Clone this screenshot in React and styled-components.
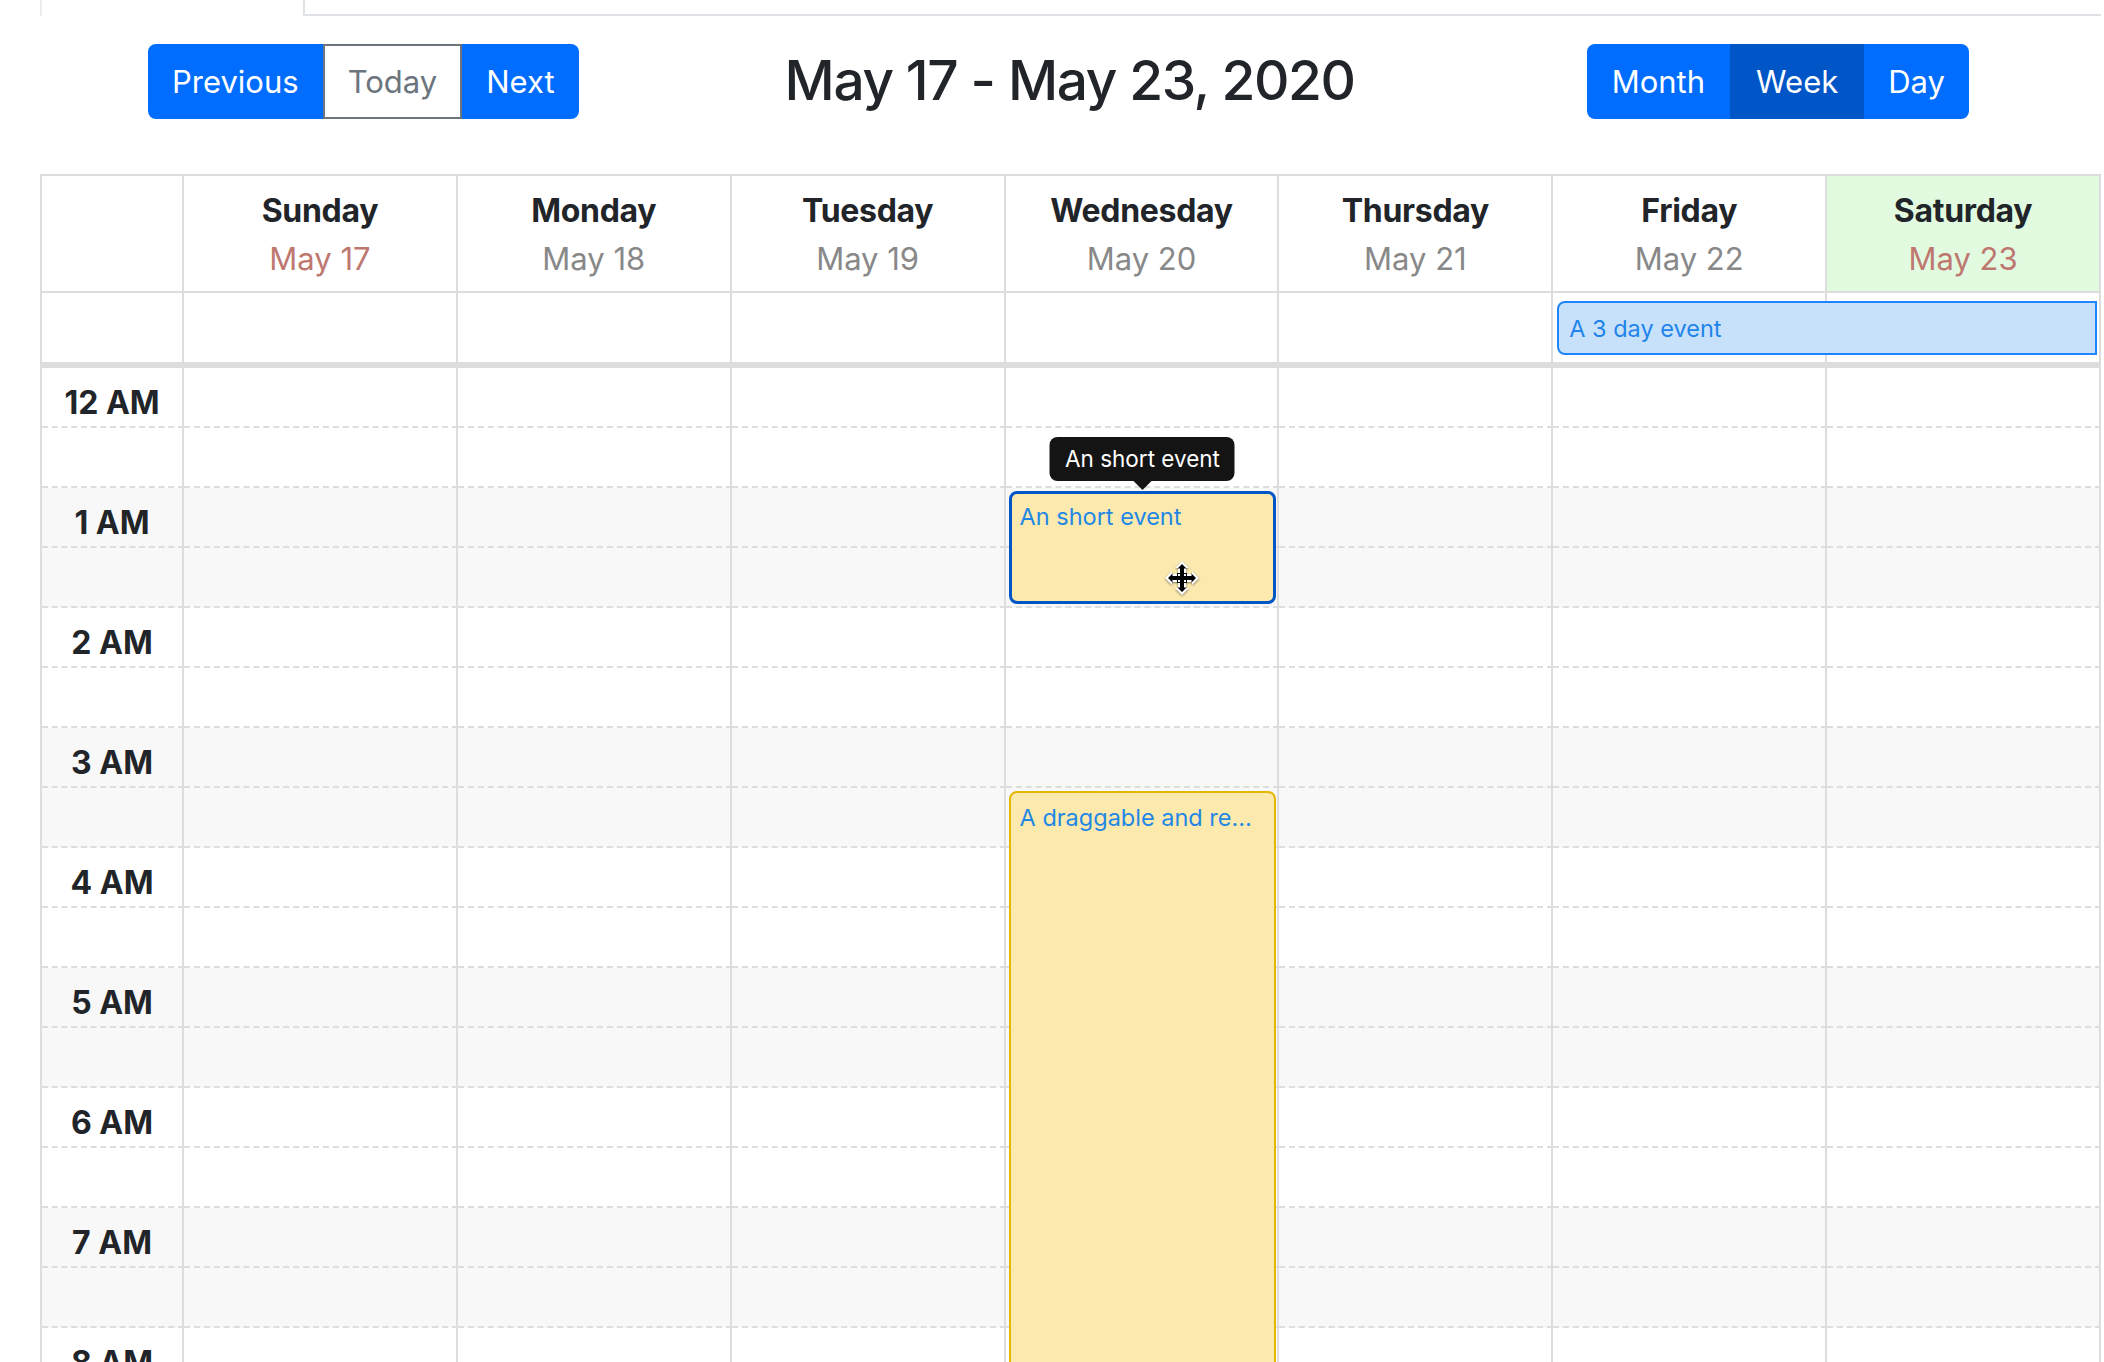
import React from "react";
import styled, { createGlobalStyle } from "styled-components";

const COLS = "142px repeat(7, 1fr)";
const LINE = "#ddd";
const SLOT_COUNT = 18;

const GlobalStyle = createGlobalStyle`
  html, body {
    margin: 0;
    background: #fff;
  }
  body {
    font-family: Inter, "Liberation Sans", sans-serif;
    color: #212529;
    overflow: hidden;
  }
`;

const Page = styled.div`
  padding: 0 3px 0 40px;
`;

const Tabs = styled.div`
  display: flex;
  height: 14px;
  border-bottom: 2px solid #dee2e6;
`;

const ActiveTab = styled.div`
  width: 265px;
  height: 16px;
  box-sizing: border-box;
  background: #fff;
  border-left: 2px solid #e9ecef;
  border-right: 2px solid #dee2e6;
`;

const Toolbar = styled.div`
  display: flex;
  align-items: center;
  justify-content: space-between;
  margin-top: 28px;
  padding: 0 132px 0 108px;
`;

const ButtonGroup = styled.div`
  display: inline-flex;
  border-radius: 8px;
  overflow: hidden;
`;

const Button = styled.button`
  height: 75px;
  padding: 0 ${({ $pad }) => $pad}px;
  font-family: inherit;
  font-size: 31px;
  border: none;
  cursor: pointer;
  color: ${({ $outline }) => ($outline ? "#6c757d" : "#fff")};
  background: ${({ $outline, $active }) =>
    $outline ? "#fff" : $active ? "#0055c7" : "#006dff"};
  box-shadow: ${({ $outline }) =>
    $outline ? "inset 0 0 0 2px #6c757d" : "none"};
`;

const Title = styled.h1`
  margin: 0 26px 4px 0;
  font-size: 55px;
  font-weight: 500;
  color: #212529;
  letter-spacing: -1.4px;
`;

const Calendar = styled.div`
  margin-top: 55px;
  border-top: 2px solid ${LINE};
  border-left: 2px solid ${LINE};
`;

const HeaderRow = styled.div`
  display: grid;
  grid-template-columns: ${COLS};
`;

const HeaderCell = styled.div`
  height: 117px;
  box-sizing: border-box;
  padding-top: 15px;
  text-align: center;
  border-right: 2px solid ${LINE};
  border-bottom: 2px solid ${LINE};
  background: ${({ $today }) => ($today ? "#e2fbe0" : "#fff")};
`;

const DayName = styled.div`
  font-size: 32px;
  line-height: 40px;
  font-weight: 700;
  color: #212529;
  letter-spacing: -0.3px;
`;

const DayDate = styled.div`
  margin-top: 9px;
  font-size: 31px;
  line-height: 38px;
  color: ${({ $weekend }) => ($weekend ? "#be7870" : "#888")};
`;

const AllDayRow = styled.div`
  display: grid;
  grid-template-columns: ${COLS};
  grid-template-rows: 69px;
  border-bottom: 6px solid ${LINE};
`;

const AllDayLines = styled.div`
  grid-column: 1 / -1;
  grid-row: 1;
  display: grid;
  grid-template-columns: ${COLS};
`;

const AllDayCell = styled.div`
  border-right: 2px solid ${LINE};
`;

const AllDayEvent = styled.div`
  grid-column: 7 / 9;
  grid-row: 1;
  margin: 8px 4px 7px 4px;
  display: flex;
  align-items: center;
  padding: 0 10px;
  background: #c8e1fa;
  border: 2px solid #1f85ff;
  border-radius: 8px 0 0 8px;
  color: #1f84ea;
  font-size: 23.5px;
`;

const TimeBody = styled.div`
  display: grid;
  grid-template-columns: ${COLS};
`;

const Column = styled.div`
  display: grid;
  grid-template-columns: 100%;
  grid-template-rows: repeat(${SLOT_COUNT}, 60px);
`;

const SlotStack = styled.div`
  grid-column: 1;
  grid-row: 1 / -1;
  display: flex;
  flex-direction: column;
`;

const Slot = styled.div`
  height: 60px;
  flex: none;
  box-sizing: border-box;
  border-bottom: 2px dashed ${LINE};
  border-right: 2px solid ${LINE};
  background: ${({ $odd }) => ($odd ? "#f8f8f8" : "#fff")};
  display: flex;
  align-items: center;
  justify-content: center;
`;

const HourLabel = styled.span`
  font-size: 32px;
  font-weight: 700;
  color: #212529;
  margin-top: 10px;
`;

const Event = styled.div`
  grid-column: 1;
  position: relative;
  margin: 3px 3px 4px 3px;
  padding: ${({ $selected }) => ($selected ? "9px 8px" : "11px 22px 11px 9px")};
  box-sizing: border-box;
  background: #fbe9ad;
  border: ${({ $selected }) =>
    $selected ? "3px solid #0055c7" : "2px solid #e5b700"};
  border-radius: 8px;
  min-width: 0;
`;

const EventTitle = styled.div`
  font-size: 23.5px;
  line-height: 28px;
  color: #1f87e6;
  white-space: nowrap;
  overflow: hidden;
  text-overflow: ellipsis;
`;

const Tooltip = styled.div`
  position: absolute;
  left: 50%;
  bottom: calc(100% + 13px);
  transform: translateX(-50%);
  background: #141414;
  color: #fff;
  font-size: 22.5px;
  line-height: 44px;
  padding: 0 15px;
  border-radius: 8px;
  white-space: nowrap;

  &::after {
    content: "";
    position: absolute;
    top: 100%;
    left: 50%;
    transform: translateX(-50%);
    border-top: 9px solid #141414;
    border-left: 9px solid transparent;
    border-right: 9px solid transparent;
  }
`;

const MoveCursor = styled.svg`
  position: absolute;
  left: 153px;
  top: 67px;
  filter: drop-shadow(0 1px 1px rgba(0, 0, 0, 0.45));
`;

const days = [
  { name: "Sunday", date: "May 17", weekend: true },
  { name: "Monday", date: "May 18" },
  { name: "Tuesday", date: "May 19" },
  { name: "Wednesday", date: "May 20" },
  { name: "Thursday", date: "May 21" },
  { name: "Friday", date: "May 22" },
  { name: "Saturday", date: "May 23", weekend: true, today: true },
];

function hourLabel(h) {
  const suffix = h < 12 ? "AM" : "PM";
  const n = h % 12 === 0 ? 12 : h % 12;
  return `${n} ${suffix}`;
}

const slots = Array.from({ length: SLOT_COUNT }, (_, i) => i);

function Cursor() {
  return (
    <MoveCursor width="34" height="34" viewBox="0 0 34 34">
      <path
        d="M17 0 L24 7 L21 7 L21 13 L27 13 L27 10 L34 17 L27 24 L27 21 L21 21 L21 27 L24 27 L17 34 L10 27 L13 27 L13 21 L7 21 L7 24 L0 17 L7 10 L7 13 L13 13 L13 7 L10 7 Z"
        fill="#fff"
      />
      <path
        d="M17 3 L21.5 7.5 L19 7.5 L19 15 L26.5 15 L26.5 12.5 L31 17 L26.5 21.5 L26.5 19 L19 19 L19 26.5 L21.5 26.5 L17 31 L12.5 26.5 L15 26.5 L15 19 L7.5 19 L7.5 21.5 L3 17 L7.5 12.5 L7.5 15 L15 15 L15 7.5 L12.5 7.5 Z"
        fill="#000"
      />
      <rect x="12" y="12" width="10" height="10" fill="#000" />
      <rect x="13" y="13" width="2" height="2" fill="#fff" />
      <rect x="19" y="13" width="2" height="2" fill="#fff" />
      <rect x="13" y="19" width="2" height="2" fill="#fff" />
      <rect x="19" y="19" width="2" height="2" fill="#fff" />
    </MoveCursor>
  );
}

function DayColumn({ index }) {
  return (
    <Column>
      <SlotStack>
        {slots.map((s) => (
          <Slot key={s} $odd={Math.floor(s / 2) % 2 === 1} />
        ))}
      </SlotStack>
      {index === 3 && (
        <>
          <Event $selected style={{ gridRow: "3 / 5" }}>
            <EventTitle>An short event</EventTitle>
            <Tooltip>An short event</Tooltip>
            <Cursor />
          </Event>
          <Event style={{ gridRow: `8 / ${SLOT_COUNT + 1}` }}>
            <EventTitle>A draggable and resizable event</EventTitle>
          </Event>
        </>
      )}
    </Column>
  );
}

export default function App() {
  return (
    <Page>
      <GlobalStyle />
      <Tabs>
        <ActiveTab />
      </Tabs>
      <Toolbar>
        <ButtonGroup>
          <Button $pad={24}>Previous</Button>
          <Button $pad={25} $outline>
            Today
          </Button>
          <Button $pad={24}>Next</Button>
        </ButtonGroup>
        <Title>May 17 - May 23, 2020</Title>
        <ButtonGroup>
          <Button $pad={25}>Month</Button>
          <Button $pad={26} $active>
            Week
          </Button>
          <Button $pad={24}>Day</Button>
        </ButtonGroup>
      </Toolbar>
      <Calendar>
        <HeaderRow>
          <HeaderCell />
          {days.map((d) => (
            <HeaderCell key={d.name} $today={d.today}>
              <DayName>{d.name}</DayName>
              <DayDate $weekend={d.weekend}>{d.date}</DayDate>
            </HeaderCell>
          ))}
        </HeaderRow>
        <AllDayRow>
          <AllDayLines>
            <AllDayCell />
            {days.map((d) => (
              <AllDayCell key={d.name} />
            ))}
          </AllDayLines>
          <AllDayEvent>A 3 day event</AllDayEvent>
        </AllDayRow>
        <TimeBody>
          <SlotStack>
            {slots.map((s) => (
              <Slot key={s} $odd={Math.floor(s / 2) % 2 === 1}>
                {s % 2 === 0 && <HourLabel>{hourLabel(s / 2)}</HourLabel>}
              </Slot>
            ))}
          </SlotStack>
          {days.map((d, i) => (
            <DayColumn key={d.name} index={i} />
          ))}
        </TimeBody>
      </Calendar>
    </Page>
  );
}
